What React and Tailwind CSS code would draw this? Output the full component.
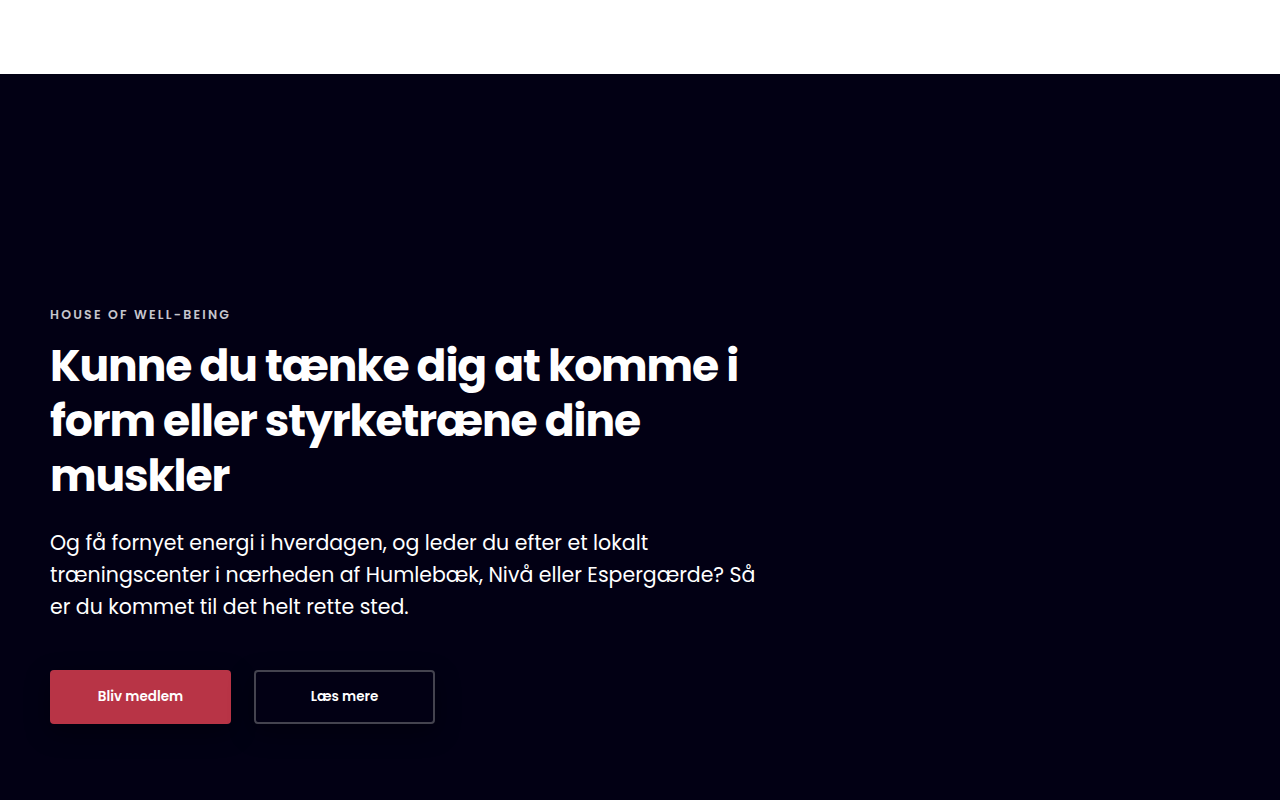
export default function App() {
  return (
    <div className="min-h-screen bg-[#020014] font-['Poppins','DejaVu_Sans',sans-serif]">
      <header className="h-[74px] bg-white" />

      <section className="px-[50px] pt-[233px] pb-[76px]">
        <div className="max-w-[720px]">
          <p className="text-[12.5px] font-semibold uppercase leading-4 tracking-[2.2px] text-[#c6c5cc]">
            House of Well-Being
          </p>
          <h1 className="mt-[15px] text-[44px] font-bold leading-[55px] tracking-[-0.025em] text-white">
            Kunne du tænke dig at komme i form eller styrketræne dine muskler
          </h1>
          <p className="mt-6 text-[20.5px] leading-8 text-white">
            Og få fornyet energi i hverdagen, og leder du efter et lokalt træningscenter i nærheden af Humlebæk, Nivå eller Espergærde? Så er du kommet til det helt rette sted.
          </p>
          <div className="mt-[47px] flex gap-[23px]">
            <button className="h-[54px] w-[181px] rounded bg-[#b83446] text-[13.5px] font-semibold text-white shadow-[0_8px_24px_rgba(0,0,0,0.35)]">
              Bliv medlem
            </button>
            <button className="h-[54px] w-[181px] rounded border-2 border-[#44434f] bg-[#020014] text-[13.5px] font-semibold text-white shadow-[0_8px_24px_rgba(0,0,0,0.35)]">
              Læs mere
            </button>
          </div>
        </div>
      </section>
    </div>
  )
}
